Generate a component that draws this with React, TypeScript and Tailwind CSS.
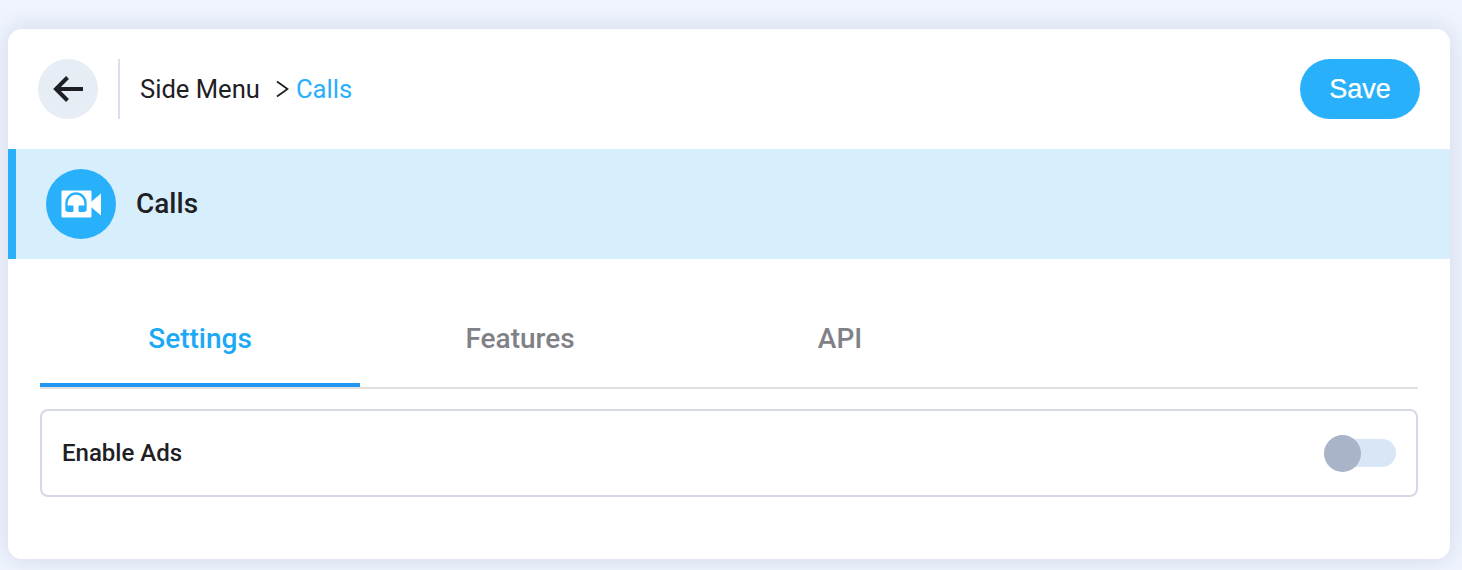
import React from "react";

// Headset inside a video camera
const CallsIcon: React.FC = () => (
  <svg width="40" height="28" viewBox="0 0 40 28" fill="none">
    <path d="M1.5 0.5H29.5a1 1 0 0 1 1 1V26.5a1 1 0 0 1-1 1H1.5a1 1 0 0 1-1-1V1.5a1 1 0 0 1 1-1Z" fill="#fff" />
    <path d="M30 12L40 3.5V25.5L30 17Z" fill="#fff" />
    <path d="M5.5 21V13a9.5 9.5 0 0 1 19 0V21" stroke="#29b0fb" strokeWidth="2.4" />
    <rect x="5.5" y="15.5" width="7" height="6.5" rx="1" fill="#29b0fb" />
    <rect x="17.5" y="15.5" width="7" height="6.5" rx="1" fill="#29b0fb" />
  </svg>
);

const tabs = ["Settings", "Features", "API"];

const App: React.FC = () => {
  return (
    <div className="h-[570px] w-[1462px] overflow-hidden bg-[#eff4fd] pt-[29px] pl-2 font-['Roboto',sans-serif]">
      <div className="h-[530px] w-[1442px] overflow-hidden rounded-[14px] bg-white shadow-[0_0_24px_rgba(90,105,150,0.2)]">
        {/* Header */}
        <div className="flex h-[120px] items-center justify-between px-[30px]">
          <div className="flex items-center">
            <button className="flex h-[60px] w-[60px] items-center justify-center rounded-full bg-[#e6edf4]">
              <svg width="32" height="28" viewBox="0 0 32 28" fill="none">
                <path d="M31 14H4M15.5 2.5L4 14L15.5 25.5" stroke="#1c1f24" strokeWidth="4" />
              </svg>
            </button>
            <div className="ml-5 h-[60px] w-0.5 bg-[#d8e0ec]" />
            <div className="ml-5 flex items-center text-[25.6px] text-[#1e2024]">
              <span>Side Menu</span>
              <svg className="ml-4" width="13" height="18" viewBox="0 0 13 18" fill="none">
                <path d="M1 1.5L11.5 9L1 16.5" stroke="#1e2024" strokeWidth="1.8" />
              </svg>
              <span className="ml-[7px] text-[#29b0fb]">Calls</span>
            </div>
          </div>
          <button className="h-[60px] w-[120px] rounded-full bg-[#29b0fb] font-['Liberation_Sans',sans-serif] text-[27px] text-white [-webkit-text-stroke:0.25px_white]">
            Save
          </button>
        </div>

        {/* Section band */}
        <div className="flex h-[110px] items-center border-l-8 border-[#29b0fb] bg-[#d7effd] pl-[30px]">
          <div className="flex h-[70px] w-[70px] items-center justify-center rounded-full bg-[#29b0fb]">
            <CallsIcon />
          </div>
          <span className="ml-5 text-[28px] font-medium text-[#1e2024]">Calls</span>
        </div>

        {/* Tabs */}
        <div className="mx-8 mt-6 w-[1378px]">
          <div className="flex h-[106px] border-b-2 border-[#e0e0e0]">
            {tabs.map((tab, i) => (
              <div
                key={tab}
                className={
                  i === 0
                    ? "flex h-[104px] w-80 items-center justify-center border-b-4 border-[#2196f3] pt-3 text-[28px] font-medium text-[#1ba9f5]"
                    : "flex h-[104px] w-80 items-center justify-center pt-2 text-[28px] font-medium text-[#808187]"
                }
              >
                {tab}
              </div>
            ))}
          </div>

          {/* Enable Ads row */}
          <div className="mt-5 flex h-[88px] items-center justify-between rounded-lg border-2 border-[#d5d9e5] px-5">
            <span className="text-[24px] font-medium text-[#1e2024]">Enable Ads</span>
            <div className="relative h-7 w-[72px] rounded-full bg-[#d8e6f5]">
              <div className="absolute -top-1 left-0 h-[37px] w-[37px] rounded-full bg-[#aab4c9]" />
            </div>
          </div>
        </div>
      </div>
    </div>
  );
};

export default App;
